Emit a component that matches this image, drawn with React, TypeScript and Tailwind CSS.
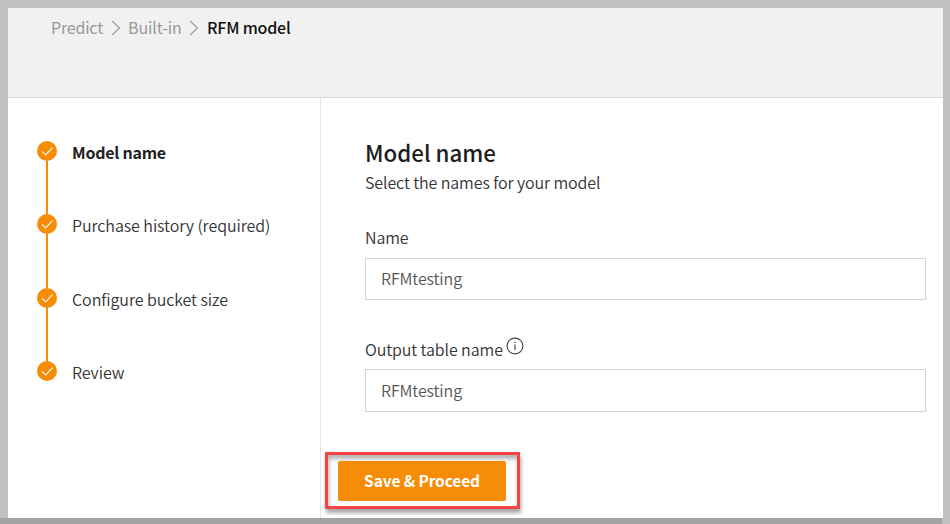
import { Fragment } from "react";

const steps = ["Model name", "Purchase history (required)", "Configure bucket size", "Review"];

function Chevron() {
  return (
    <svg className="mt-px h-4 w-2.5 shrink-0" viewBox="0 0 10 16" fill="none" stroke="#999999" strokeWidth="1.1">
      <path d="M1 1 L8.5 8 L1 15" />
    </svg>
  );
}

function StepDot() {
  return (
    <svg className="h-5 w-5 shrink-0" viewBox="0 0 20 20" fill="none">
      <circle cx="10" cy="10" r="10" fill="#f78c07" />
      <path d="M5.1 10.5 L8.6 13.9 L15.6 6.6" stroke="#fff3e2" strokeWidth="1.3" />
    </svg>
  );
}

function InfoIcon() {
  return (
    <svg className="-mt-[6px] ml-[3px] h-[18px] w-[18px]" viewBox="0 0 18 18" fill="none" stroke="#444444">
      <circle cx="9" cy="9" r="7.9" strokeWidth="1.1" />
      <path d="M9 7.5V13" strokeWidth="1.2" />
      <path d="M9 4.8V6" strokeWidth="1.3" />
    </svg>
  );
}

export default function App() {
  return (
    <div className="flex h-[524px] w-[950px] flex-col overflow-hidden bg-[#c0c0c0] pt-2 font-['Noto_Sans_CJK_SC',sans-serif] text-base leading-6 text-[#333333]">
      <div className="ml-2 flex h-[510px] w-[935px] flex-col bg-white">
        <header className="h-[90px] shrink-0 border-b border-[#dcdcdc] bg-[#f1f1f1] pt-[7px] pl-[43px]">
          <nav className="flex items-center text-[#999999]">
            {["Predict", "Built-in"].map((label, i) => (
              <Fragment key={label}>
                <span className={i === 0 ? "w-[60px] tracking-[-0.2px]" : "ml-[7px] w-[61px] tracking-[-0.1px]"}>{label}</span>
                <Chevron />
              </Fragment>
            ))}
            <span className="ml-2 font-medium tracking-[-0.2px] text-[#111111]">RFM model</span>
          </nav>
        </header>
        <div className="flex min-h-0 flex-1">
          <aside className="w-[313px] shrink-0 border-r border-[#e6e6e6] pt-[43px] pl-[29px]">
            {steps.map((step, i) => (
              <div key={step} className={i < 3 ? "flex h-[73.4px]" : "flex"}>
                <div className="flex w-5 flex-col items-center">
                  <StepDot />
                  {i < 3 && <div className="w-0.5 flex-1 bg-[#f78c07]" />}
                </div>
                <span className={i === 0 ? "-mt-px ml-[15px] font-bold tracking-[-0.25px] text-[#222222]" : "-mt-px ml-[15px] font-[350] tracking-[-0.07px]"}>{step}</span>
              </div>
            ))}
          </aside>
          <main className="flex-1 pt-[38px] pl-11">
            <h1 className="text-[22.3px] leading-8 font-medium text-[#1c1c1c]">Model name</h1>
            <p className="mt-[2px] font-[350] tracking-[-0.1px]">Select the names for your model</p>
            <label className="mt-[31px] block font-[350] tracking-[-0.1px]">Name</label>
            <input className="mt-[9px] block h-[42px] w-[561px] border border-[#cfd3e0] bg-white px-[15px] pb-0.5 font-[350] tracking-[-0.1px] text-[#555555]" defaultValue="RFMtesting" />
            <div className="mt-[37px] flex items-center font-[350] tracking-[-0.1px]">
              <label>Output table name</label>
              <InfoIcon />
            </div>
            <input className="mt-2 block h-[43px] w-[561px] border border-[#cfd3e0] bg-white px-[15px] pb-0.5 font-[350] tracking-[-0.1px] text-[#555555]" defaultValue="RFMtesting" />
            <div className="mt-10 -ml-10 flex h-[57px] w-[195px] items-center justify-center border-[3px] border-[#f84345] shadow-[1px_4px_4px_rgba(0,0,0,0.35),inset_1px_4px_4px_rgba(0,0,0,0.3)]">
              <button className="mr-px h-10 w-[168px] rounded-xs bg-[#f78c07] pb-0.5 text-[15.5px] font-bold tracking-[-0.12px] text-white">Save &amp; Proceed</button>
            </div>
          </main>
        </div>
      </div>
      <div className="z-10 h-1.5 w-[942px] bg-[#a3a3a3]" />
    </div>
  );
}
